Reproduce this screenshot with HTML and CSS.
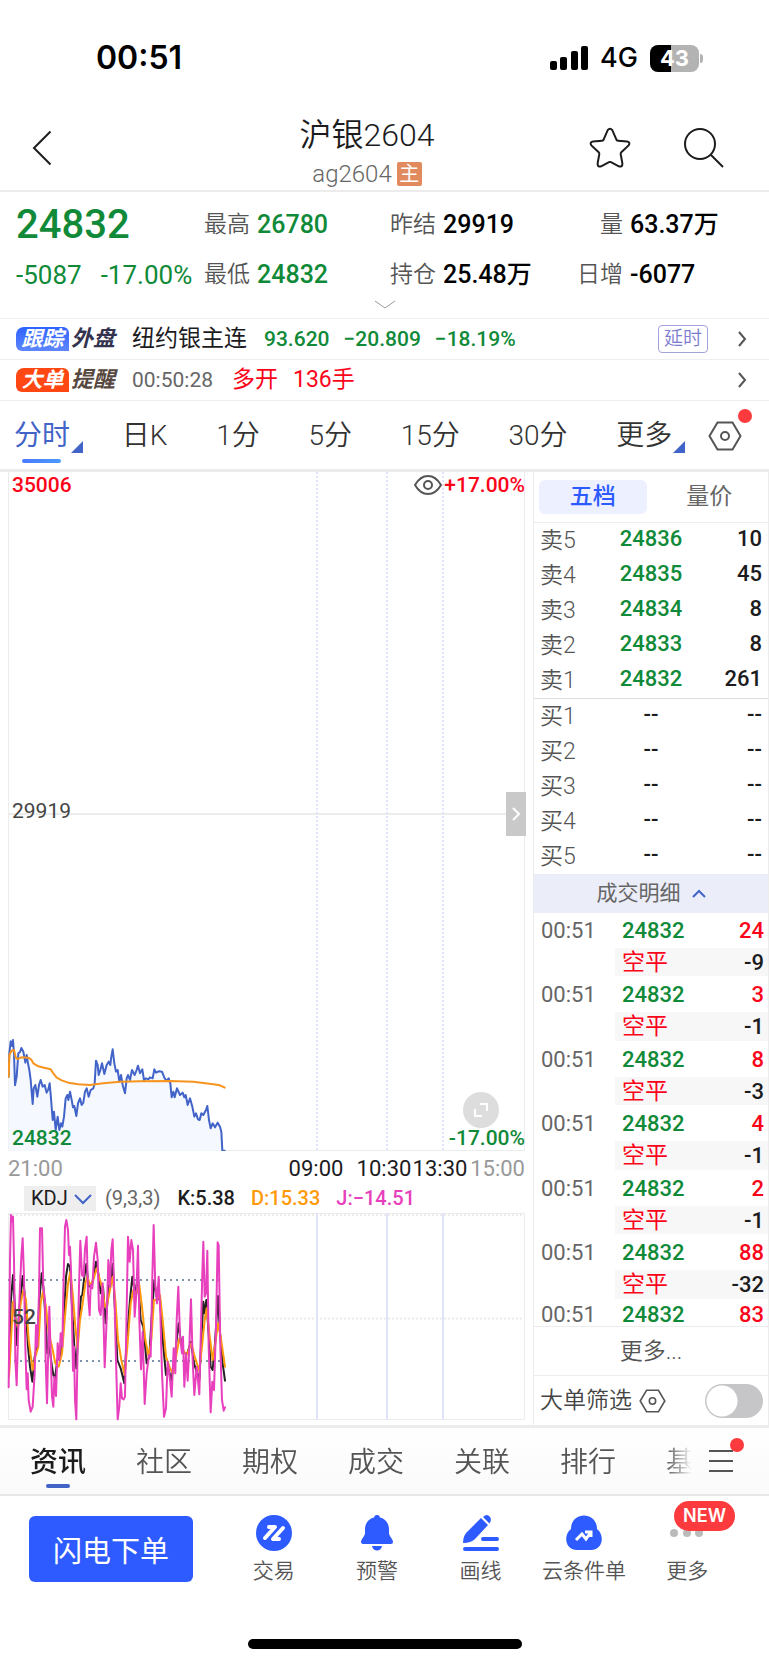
FILE: index.html
```html
<!DOCTYPE html>
<html lang="zh-CN">
<head>
  <meta charset="UTF-8">
  <meta name="viewport" content="width=device-width, initial-scale=1">
  <title>沪银2604</title>
  <link rel="stylesheet" href="styles.css">
</head>
<body>

  <!-- STATUS BAR -->
  <div class="status-bar">
    <span class="clock">00:51</span>
    <div class="status-icons">
      <svg width="38" height="24" viewBox="0 0 38 24">
        <rect x="0" y="15" width="7" height="9" rx="2"/>
        <rect x="10" y="11" width="7" height="13" rx="2"/>
        <rect x="21" y="5" width="7" height="19" rx="2"/>
        <rect x="31" y="0" width="7" height="24" rx="2"/>
      </svg>
      <span class="network">4G</span>
      <span class="battery">43</span>
    </div>
  </div>

  <!-- HEADER -->
  <header class="header">
    <button class="icon-btn back" aria-label="返回">
      <svg width="20" height="36" viewBox="0 0 20 36"><path d="M18.500 1.500L2 18l16.500 16.500"/></svg>
    </button>
    <div class="title">
      <h1>沪银2604</h1>
      <p>ag2604<span class="main-badge">主</span></p>
    </div>
    <div class="header-actions">
      <button class="icon-btn" aria-label="自选">
        <svg width="42" height="42" viewBox="0 0 42 42"><path d="M18.700 3.200Q21 .2 23.300 3.200L27.300 12.400Q27.700 13.600 29 13.700L38 14.600Q41.800 15.400 39.600 18.400L32.300 25.300Q31.600 26 31.700 27.200L33.400 36.500Q33.500 40.600 29.800 39.300L22 35.200Q21 34.700 20 35.200L12.200 39.300Q8.500 40.600 8.600 36.500L10.300 27.200Q10.400 26 9.700 25.300L2.400 18.400Q.2 15.400 4 14.600L13 13.700Q14.300 13.600 14.700 12.400Z"/></svg>
      </button>
      <button class="icon-btn" aria-label="搜索">
        <svg width="42" height="42" viewBox="0 0 42 42"><circle cx="17" cy="17" r="15"/><path d="M28 28l12 12"/></svg>
      </button>
    </div>
  </header>

  <!-- QUOTE -->
  <section class="quote">
    <div class="quote-grid">
      <strong class="last">24832</strong>
      <div class="pair"><span>最高</span><b class="down">26780</b></div>
      <div class="pair"><span>昨结</span><b>29919</b></div>
      <div class="pair"><span class="right">量</span><b>63.37万</b></div>
      <div class="change down"><span>-5087</span><span>-17.00%</span></div>
      <div class="pair"><span>最低</span><b class="down">24832</b></div>
      <div class="pair"><span>持仓</span><b>25.48万</b></div>
      <div class="pair"><span class="right">日增</span><b>-6077</b></div>
    </div>
    <button class="icon-btn expand" aria-label="展开">
      <svg width="22" height="10" viewBox="0 0 22 10"><path d="M1 1l10 7 10-7"/></svg>
    </button>
  </section>

  <a class="strip" href="#">
    <span class="tag"><i class="tag-fill blue">跟踪</i><i class="tag-text navy">外盘</i></span>
    <span class="strip-name">纽约银主连</span>
    <span class="strip-num down">93.620</span>
    <span class="strip-num down">−20.809</span>
    <span class="strip-num down">−18.19%</span>
    <span class="delay">延时</span>
    <svg class="arrow" width="9" height="16" viewBox="0 0 9 16"><path d="M1 1l6 7-6 7"/></svg>
  </a>
  <a class="strip" href="#">
    <span class="tag"><i class="tag-fill orange">大单</i><i class="tag-text brown">提醒</i></span>
    <span class="strip-time">00:50:28</span>
    <span class="strip-red">多开</span>
    <span class="strip-red">136手</span>
    <svg class="arrow" width="9" height="16" viewBox="0 0 9 16"><path d="M1 1l6 7-6 7"/></svg>
  </a>

  <!-- PERIOD TABS -->
  <nav class="periods">
    <button class="period active corner">分时</button>
    <button class="period">日K</button>
    <button class="period">1分</button>
    <button class="period">5分</button>
    <button class="period">15分</button>
    <button class="period">30分</button>
    <button class="period corner">更多</button>
    <button class="icon-btn setting" aria-label="设置">
      <svg width="34" height="30" viewBox="0 0 34 30"><path d="M9.500 1.500h15L32.500 15l-8 13.500h-15L1.500 15z"/><circle cx="17" cy="15" r="4"/></svg>
    </button>
  </nav>

  <main class="main">
    <!-- CHARTS -->
    <section class="charts">
      <div class="chart price-chart">
        <svg viewBox="0 0 517 679" preserveAspectRatio="none">
          <path class="axis" d="M.5 0V678.500H516.500V0"/>
          <path class="axis" d="M0 342H517" stroke-width="2"/>
          <path class="session dotted" d="M309 0V679M379 0V679M435 0V679"/>
          <g transform="translate(-8 548) scale(.33333)">
            <path class="area" d="M26 392V170L28 100 32 64 36 78 39 60 42 100 45 196 50 170 55 100 60 96 64 84 70 95 76 128 80 105 84 130 88 150 92 180 98 252 101 205 106 195 112 230 117 195 122 180 128 200 134 195 140 218 145 208 149 190 153 235 158 300 162 275 167 330 173 290 178 330 183 310 187 320 192 290 197 235 202 225 205 240 210 215 215 240 219 262 223 258 229 288 234 250 240 235 245 255 250 248 255 215 260 205 266 230 272 210 280 205 284 190 288 122 296 165 306 130 313 162 326 125 338 88 348 155 358 185 363 165 375 220 384 165 396 150 414 137 432 180 458 175 463 148 486 155 500 182 511 190 515 232 531 205 553 232 577 260 594 298 622 258 632 325 653 308 664 335 667 392z"/>
            <polyline class="line price" points="26,170 28,100 32,64 36,78 39,60 42,100 45,196 50,170 55,100 60,96 64,84 70,95 76,128 80,105 84,130 88,150 92,180 98,252 101,205 106,195 112,230 117,195 122,180 128,200 134,195 140,218 145,208 149,190 153,235 158,300 162,275 167,330 173,290 178,330 183,310 187,320 192,290 197,235 202,225 205,240 210,215 215,240 219,262 223,258 229,288 234,250 240,235 245,255 250,248 255,215 260,205 266,230 272,210 280,205 284,190 288,122 293,135 296,165 301,150 306,130 313,162 320,135 326,125 331,135 334,110 338,88 343,130 348,155 353,150 358,185 363,165 368,195 375,220 380,175 384,165 390,180 396,150 404,165 410,150 414,137 420,160 427,148 432,180 438,175 445,178 450,172 458,175 463,148 468,158 476,154 486,155 494,175 500,182 506,175 511,190 515,232 520,215 524,232 531,205 540,225 548,218 553,232 557,225 563,255 570,235 577,260 583,290 588,280 594,298 599,300 604,280 610,285 618,270 622,258 627,300 632,325 638,310 645,322 653,308 660,320 664,335 667,392 674,392"/>
            <polyline class="line average" points="26,170 28,105 34,93 42,90 47,112 52,117 65,112 85,113 93,118 100,130 115,139 135,144 152,148 160,160 170,173 185,181 205,188 235,193 270,195 310,190 360,185 420,184 510,183 580,185 640,193 660,196 674,203"/>
          </g>
        </svg>
        <span class="scale top-left up">35006</span>
        <span class="scale top-right up">
          <svg width="28" height="20" viewBox="0 0 28 20"><path d="M1 10C8-2 20-2 27 10 20 22 8 22 1 10z"/><circle cx="14" cy="10" r="4"/></svg>+17.00%</span>
        <span class="scale middle-left">29919</span>
        <span class="scale bottom-left down">24832</span>
        <span class="scale bottom-right down">-17.00%</span>
        <button class="side-handle" aria-label="收起盘口">
          <svg width="9" height="14" viewBox="0 0 9 14"><path d="M1 1l6 6-6 6"/></svg>
        </button>
        <button class="fullscreen" aria-label="全屏">
          <svg width="16" height="16" viewBox="0 0 16 16"><path d="M7 2h7v7M2 7v7h7"/></svg>
        </button>
      </div>

      <div class="time-axis">
        <span class="edge">21:00</span>
        <span>09:00</span>
        <span>10:30</span>
        <span>13:30</span>
        <span class="edge last-time">15:00</span>
      </div>

      <div class="indicator">
        <label class="indicator-pick">
          <select aria-label="指标"><option>KDJ</option></select>
          <svg width="18" height="11" viewBox="0 0 18 11"><path d="M1 1l8 8 8-8"/></svg>
        </label>
        <span class="params">(9,3,3)</span>
        <span class="k">K:5.38</span>
        <span class="d">D:15.33</span>
        <span class="j">J:−14.51</span>
      </div>

      <div class="chart kdj-chart">
        <svg viewBox="0 0 517 207" preserveAspectRatio="none">
          <path class="axis" d="M.5 .5H516.500V206.500H.5z"/>
          <path class="axis dotted" d="M0 2H517M0 105.500H517" stroke-width="2"/>
          <path class="session" d="M309 0V207M379 0V207M435 0V207"/>
          <path class="level" d="M0 67H214M0 148H214"/>
          <g transform="translate(-8 -53) scale(.33333)">
            <polyline class="line kdj-k" points="27,640 32,430 39,345 44,430 50,555 58,450 68,348 76,420 84,560 90,620 97,665 104,590 112,560 118,420 125,340 131,390 138,500 142,580 148,560 156,620 160,645 165,655 172,600 182,590 190,500 198,350 204,312 210,320 216,440 223,560 229,625 236,500 243,410 247,405 253,350 259,312 266,380 276,375 288,305 295,340 302,400 309,380 317,490 326,380 332,360 338,312 345,450 352,600 362,625 373,670 380,540 390,420 397,350 405,400 414,350 422,480 430,500 440,610 448,590 455,470 463,362 470,410 480,420 490,560 498,645 504,620 514,660 522,610 530,540 536,490 542,540 552,580 562,580 573,545 582,610 598,660 604,540 610,425 614,460 619,420 626,520 632,620 638,630 645,550 654,408 660,520 668,610 675,662"/>
            <polyline class="line kdj-d" points="27,650 33,540 39,425 46,480 54,500 62,430 70,390 78,420 86,540 98,630 106,590 115,560 122,430 129,395 138,440 146,520 156,560 166,610 176,620 186,580 194,480 204,370 211,335 218,400 226,500 233,565 240,480 248,430 256,370 262,350 270,375 280,360 290,325 300,360 308,385 314,440 322,430 330,390 338,350 346,420 354,540 364,600 374,645 382,560 392,430 400,390 410,400 418,375 426,440 436,540 446,590 454,540 462,420 470,420 480,405 488,480 498,590 510,625 520,640 530,580 538,535 548,570 560,585 574,550 584,590 598,632 606,560 614,480 620,445 628,520 638,600 646,550 654,490 662,530 675,620"/>
            <polyline class="line kdj-j" points="26,682 30,300 33,165 36,185 39,170 42,300 46,600 50,676 55,500 60,380 64,290 68,235 72,350 76,560 80,688 83,640 86,720 92,755 98,740 104,640 108,495 112,560 117,400 120,205 126,205 130,380 135,420 137,600 141,730 145,560 148,440 152,580 156,710 160,740 163,650 168,708 173,550 178,600 182,520 187,560 191,350 195,200 199,180 204,210 207,285 210,260 213,330 216,480 219,632 222,560 225,720 229,778 233,560 237,380 241,242 246,345 251,350 255,265 260,230 264,400 269,466 272,375 277,385 282,290 288,248 293,300 297,450 302,465 308,370 314,622 320,480 325,300 330,380 334,270 338,238 343,400 348,600 353,778 358,740 362,670 366,715 371,718 375,710 379,500 384,230 389,305 394,240 399,270 404,470 409,400 414,257 418,480 423,628 428,515 434,732 440,640 447,585 452,590 457,350 461,195 466,380 471,430 476,350 481,460 486,640 492,770 498,745 503,605 509,650 515,710 521,565 526,640 530,480 535,380 540,530 546,580 549,530 553,680 558,580 563,662 568,560 573,418 578,600 583,705 590,620 598,703 603,500 607,340 610,245 614,410 618,400 622,272 626,560 632,757 637,665 642,690 648,500 653,247 656,255 661,560 666,720 671,752 675,742"/>
          </g>
        </svg>
        <span class="scale center-left">52</span>
      </div>
    </section>

    <!-- ORDER BOOK -->
    <aside class="book">
      <div class="book-tabs">
        <button class="book-tab active">五档</button>
        <button class="book-tab">量价</button>
      </div>
      <table class="levels">
        <tbody class="asks">
          <tr><th>卖5</th><td class="down">24836</td><td>10</td></tr>
          <tr><th>卖4</th><td class="down">24835</td><td>45</td></tr>
          <tr><th>卖3</th><td class="down">24834</td><td>8</td></tr>
          <tr><th>卖2</th><td class="down">24833</td><td>8</td></tr>
          <tr><th>卖1</th><td class="down">24832</td><td>261</td></tr>
        </tbody>
        <tbody>
          <tr><th>买1</th><td>--</td><td>--</td></tr>
          <tr><th>买2</th><td>--</td><td>--</td></tr>
          <tr><th>买3</th><td>--</td><td>--</td></tr>
          <tr><th>买4</th><td>--</td><td>--</td></tr>
          <tr><th>买5</th><td>--</td><td>--</td></tr>
        </tbody>
      </table>
      <button class="detail-bar">成交明细
        <svg width="14" height="9" viewBox="0 0 14 9"><path d="M1 8l6-6 6 6"/></svg>
      </button>
      <div class="trades">
        <table>
          <tbody><tr><th>00:51</th><td class="down">24832</td><td class="up">24</td></tr><tr class="kind"><th></th><td>空平</td><td>-9</td></tr></tbody>
          <tbody><tr><th>00:51</th><td class="down">24832</td><td class="up">3</td></tr><tr class="kind"><th></th><td>空平</td><td>-1</td></tr></tbody>
          <tbody><tr><th>00:51</th><td class="down">24832</td><td class="up">8</td></tr><tr class="kind"><th></th><td>空平</td><td>-3</td></tr></tbody>
          <tbody><tr><th>00:51</th><td class="down">24832</td><td class="up">4</td></tr><tr class="kind"><th></th><td>空平</td><td>-1</td></tr></tbody>
          <tbody><tr><th>00:51</th><td class="down">24832</td><td class="up">2</td></tr><tr class="kind"><th></th><td>空平</td><td>-1</td></tr></tbody>
          <tbody><tr><th>00:51</th><td class="down">24832</td><td class="up">88</td></tr><tr class="kind"><th></th><td>空平</td><td>-32</td></tr></tbody>
          <tbody class="final"><tr><th>00:51</th><td class="down">24832</td><td class="up">83</td></tr></tbody>
        </table>
      </div>
      <button class="more-trades">更多...</button>
      <label class="filter">
        <span>大单筛选</span>
        <svg width="27" height="24" viewBox="0 0 34 30"><path d="M9.500 1.500h15L32.500 15l-8 13.500h-15L1.500 15z"/><circle cx="17" cy="15" r="4"/></svg>
        <input type="checkbox" class="switch">
      </label>
    </aside>
  </main>

  <!-- NEWS TABS -->
  <nav class="news-tabs">
    <div class="news-scroll">
      <button class="active">资讯</button>
      <button>社区</button>
      <button>期权</button>
      <button>成交</button>
      <button>关联</button>
      <button>排行</button>
      <button>基差</button>
    </div>
    <button class="icon-btn menu" aria-label="全部">
      <svg width="24" height="24" viewBox="0 0 24 24"><path d="M0 2h24M0 12h24M0 22h24"/></svg>
    </button>
  </nav>

  <!-- ACTION BAR -->
  <footer class="actions">
    <button class="order-btn">闪电下单</button>
    <button class="action">
      <svg width="36" height="36" viewBox="0 0 36 36"><circle cx="18" cy="18" r="18" fill="#2d5bff"/><path d="M13 12h6L9 23M27 13L17 24h6" fill="none" stroke="#fff" stroke-width="4" stroke-linecap="round" stroke-linejoin="round"/></svg>
      交易
    </button>
    <button class="action">
      <svg width="36" height="36" viewBox="0 0 36 36"><path d="M18 0a3 3 0 0 1 3 2.400C27 4 30 9 30 14v4c0 3 4 6 4 9 0 1-1 2-2 2H4c-1 0-2-1-2-2 0-3 4-6 4-9v-4C6 9 9 4 15 2.400A3 3 0 0 1 18 0zM13 31h10c-1 6-9 6-10 0z" fill="#2d5bff"/></svg>
      预警
    </button>
    <button class="action">
      <svg width="36" height="36" viewBox="0 0 36 36"><path d="M18 3l7 7L12 24Q8 28 0 28 0 20 5 16zM20 2q4-4 7 0 2 3-.5 6.500z" fill="#2d5bff"/><path d="M20 24h14M2 34h32" stroke="#2d5bff" stroke-width="4" stroke-linecap="round"/></svg>
      画线
    </button>
    <button class="action">
      <svg width="36" height="36" viewBox="0 0 36 36"><path d="M5 14C5-4 31-4 31 14c8 6 6 21-6 21H11C-1 35-3 20 5 14z" fill="#2d5bff"/><path d="M10 25l6-6 4 5 5-7M19 17h6v5" fill="none" stroke="#fff" stroke-width="3"/></svg>
      云条件单
    </button>
    <button class="action">
      <svg width="36" height="36" viewBox="0 0 36 36"><g fill="#bbb"><circle cx="5" cy="18" r="4"/><circle cx="18" cy="18" r="4"/><circle cx="30" cy="18" r="4"/></g></svg>
      更多
      <span class="new-badge">NEW</span>
    </button>
  </footer>
  <div class="home-bar"></div>

</body>
</html>
```

FILE: styles.css
```css
* { margin: 0; padding: 0; box-sizing: border-box; }
body {
  font-family: Roboto, "Noto Sans CJK SC", sans-serif;
  background: #fff; color: #1c1c1e;
}
button, select { border: none; background: none; font: inherit; color: inherit; }
a { color: inherit; text-decoration: none; }
i { font-weight: 700; }
table { width: 100%; border-spacing: 0; table-layout: fixed; }
svg { display: block; fill: none; }
.up { color: #fb0419; }
.down { color: #108a38; }
.icon-btn svg { stroke: #1c1c1e; stroke-width: 2; }

/* STATUS BAR */
.status-bar {
  display: flex; justify-content: space-between; align-items: center;
  height: 106px; padding: 10px 70px 0 96px; color: #000;
}
.clock { font: 600 32px/40px Inter, sans-serif; }
.status-icons { display: flex; align-items: center; gap: 12px; }
.status-icons svg { fill: #000; }
.network { font: 500 27px/32px Inter, sans-serif; }
.battery {
  position: relative; width: 49px; height: 27px; border-radius: 8px;
  background: linear-gradient(90deg, #000 43%, #b3b3b3 43%);
  color: #fff; font: 700 22px/27px Inter, sans-serif; text-align: center;
}
.battery::after {
  content: ""; position: absolute; right: -4px; top: 9px;
  width: 3px; height: 9px; border-radius: 0 3px 3px 0; background: #b3b3b3;
}

/* HEADER */
.header {
  display: grid; grid-template-columns: 235fr 200fr 258fr; align-items: center;
  height: 86px; padding: 0 44px 0 32px; border-bottom: 2px solid #ececec;
}
.back { justify-self: start; }
.title { padding-top: 10px; text-align: center; }
.title h1 { font-size: 32px; font-weight: 350; line-height: 38px; }
.title p {
  display: flex; justify-content: center; align-items: center; gap: 5px; margin-top: 4px;
  font-size: 24px; font-weight: 350; line-height: 32px; color: #666;
}
.main-badge {
  width: 25px; height: 24px; border-radius: 2px; background: #e08a5e;
  color: #fff; font-size: 20px; font-weight: 400; line-height: 24px; text-align: center;
}
.header-actions { display: flex; justify-content: flex-end; gap: 52px; }

/* QUOTE */
.quote { height: 127px; padding: 8px 16px 0; border-bottom: 1px solid #eee; }
.quote-grid {
  display: grid; grid-template-columns: 188fr 186fr 187fr 176fr;
  grid-template-rows: 50px 50px; align-items: center;
}
.quote-grid > * { min-width: 0; }
.last { font-size: 40px; font-weight: 500; line-height: 48px; color: #108a38; }
.pair { display: flex; align-items: center; gap: 7px; font-size: 25px; line-height: 36px; white-space: nowrap; }
.pair span { font-size: 23px; font-weight: 350; color: #555; }
.pair b { font-weight: 500; color: #000; }
.pair b.down { color: #108a38; }
.pair .right { width: 46px; text-align: right; }
.change { display: flex; gap: 19px; font-size: 26px; line-height: 36px; white-space: nowrap; }
.expand { display: block; margin: 0 auto; }
.expand svg { stroke: #999; stroke-width: 1; }

/* STRIPS */
.strip {
  display: flex; align-items: center; height: 41px; padding: 0 22px 0 16px;
  border-bottom: 1px solid #eee; white-space: nowrap; line-height: 32px;
}
.tag { display: flex; align-items: center; gap: 2px; width: 100px; margin-right: 16px; line-height: 24px; }
.tag-fill { width: 53px; height: 24px; border-radius: 8px 6px 0 6px; color: #fff; font-size: 21px; text-align: center; }
.blue { background: linear-gradient(#2f62ff, #5d86ff); }
.orange { background: #ff4713; }
.tag-text { font-size: 22px; }
.navy { color: #33334f; }
.brown { color: #57483f; }
.strip-name { font-size: 23px; margin-right: 17px; }
.strip-num { font-size: 21px; font-weight: 500; margin-right: 14px; }
.strip-time { font-size: 21px; color: #666; margin-right: 19px; }
.strip-red { font-size: 23px; color: #fb0419; margin-right: 15px; }
.delay {
  height: 28px; margin-left: auto; padding: 0 5px; border: 1px solid #a3a3dc; border-radius: 4px;
  color: #7b7bd0; font-size: 19px; font-weight: 350; line-height: 26px;
}
.arrow { margin-left: auto; stroke: #555; stroke-width: 2; }
.delay + .arrow { margin-left: 30px; }

/* PERIOD TABS */
.periods {
  display: flex; justify-content: space-between; align-items: center;
  height: 71px; padding: 2px 27px 0 14px; border-bottom: 3px solid #ececec;
}
.period { position: relative; font-size: 28px; font-weight: 350; line-height: 36px; color: #333; }
.period.active { margin-right: -10px; color: #4263c8; font-weight: 400; }
.period.active::before {
  content: ""; position: absolute; left: 8px; bottom: -9px;
  width: 39px; height: 4px; border-radius: 2px;
  background: linear-gradient(90deg, #4a7aff, #4a9aff);
}
.corner { padding-right: 13px; }
.corner::after {
  content: ""; position: absolute; right: 0; bottom: 1px;
  border: 6px solid #4263c8; border-top-color: transparent; border-left-color: transparent;
}
.setting, .menu { position: relative; }
.setting { margin-left: -26px; }
.setting svg, .menu svg { stroke: #555; }
.setting::after, .menu::after {
  content: ""; position: absolute; right: -10px; top: -12px;
  width: 14px; height: 14px; border-radius: 50%; background: #fd3a3d;
}

/* CHARTS */
.main { display: grid; grid-template-columns: 533fr 236fr; border-bottom: 3px solid #ececec; }
.charts { padding: 0 8px 5px; min-width: 0; }
.chart { position: relative; }
.chart > svg { width: 100%; }
.price-chart > svg { height: 679px; }
.kdj-chart > svg { height: 207px; overflow: visible; }
.axis { stroke: #ececec; }
.session { stroke: #dfe4fb; stroke-width: 2; }
.dotted { stroke-dasharray: 2 2; }
.level { stroke: #8093ad; stroke-width: 2; stroke-dasharray: 2 4; }
.line { stroke-linejoin: round; stroke-linecap: round; stroke-width: 6; }
.area { fill: #f5f9ff; }
.price { stroke: #4263c8; }
.average { stroke: #f7941d; }
.kdj-k { stroke: #222; }
.kdj-d { stroke: #ff9a0a; }
.kdj-j { stroke: #e83fbd; }
.scale { position: absolute; font-size: 21px; font-weight: 500; line-height: 24px; }
.top-left { left: 4px; top: 1px; }
.top-right { right: 0; top: 1px; display: flex; align-items: center; gap: 2px; }
.top-right svg { stroke: #555; stroke-width: 2; }
.middle-left { left: 4px; top: 327px; color: #444; font-weight: 400; }
.bottom-left { left: 4px; bottom: 1px; }
.bottom-right { right: 0; bottom: 1px; }
.center-left { left: 4px; top: 92px; color: #444; }
.side-handle {
  position: absolute; right: -1px; top: 320px; width: 20px; height: 44px;
  display: grid; place-items: center; background: #c9c9c9;
}
.side-handle svg, .fullscreen svg { stroke: #fff; stroke-width: 2; }
.fullscreen {
  position: absolute; right: 26px; bottom: 23px; width: 36px; height: 36px;
  display: grid; place-items: center; border-radius: 50%; background: #ddd;
}
.time-axis {
  display: grid; grid-template-columns: 268fr 80fr 56fr 56fr 57fr;
  font-size: 22px; line-height: 35px; text-align: center;
}
.edge { color: #999; text-align: left; }
.last-time { text-align: right; }
.indicator {
  display: flex; align-items: flex-start; height: 27px; padding-left: 16px;
  font-size: 20px; line-height: 25px; white-space: nowrap;
}
.indicator-pick { position: relative; margin-right: 9px; background: #eee; }
.indicator-pick select { appearance: none; display: block; width: 72px; height: 25px; padding-left: 7px; }
.indicator-pick svg { position: absolute; right: 4px; top: 8px; stroke: #4263c8; stroke-width: 2; pointer-events: none; }
.params { color: #666; margin-right: 17px; }
.k { font-weight: 500; margin-right: 16px; }
.d { font-weight: 500; color: #ff9a0a; margin-right: 16px; }
.j { font-weight: 500; color: #e83fbd; }

/* ORDER BOOK */
.book { display: flex; flex-direction: column; border: 1px solid #ececec; border-width: 0 1px; font-size: 22px; min-width: 0; }
.book-tabs { display: grid; grid-template-columns: 106fr 106fr; gap: 9px; padding: 8px 5px; height: 51px; border-bottom: 1px solid #ececec; }
.book-tab { height: 34px; border-radius: 6px; line-height: 34px; font-size: 23px; color: #666; }
.book-tab.active { background: #edf1ff; color: #2d5bff; font-weight: 500; }
.levels tr { height: 35px; }
.levels th, .levels td { line-height: 29px; }
.levels th { padding: 3px 0 3px 6px; text-align: left; font-size: 23px; font-weight: 350; color: #555; }
.levels td { padding: 1px 0 5px; text-align: center; font-weight: 500; }
.levels td:last-child { padding-right: 6px; text-align: right; }
.asks tr:last-child th, .asks tr:last-child td { border-bottom: 1px solid #ddd; }
.detail-bar {
  display: flex; justify-content: center; align-items: center; gap: 11px;
  height: 39px; background: #ebedf9; color: #666; font-size: 21px; line-height: 39px;
}
.detail-bar svg { stroke: #4263c8; stroke-width: 2; }
.trades { padding-top: 1px; border-bottom: 1px solid #ececec; }
.trades tr { height: 32px; }
.trades tbody:nth-child(even) .kind { height: 33px; }
.trades th { width: 81px; padding-left: 7px; text-align: left; font-weight: 400; color: #666; }
.trades td { line-height: 27px; padding-left: 7px; font-weight: 500; }
.trades td:last-child { padding: 0 4px 0 0; text-align: right; }
.trades .kind td { background: #f7f7f8; border: 2px solid #fff; border-width: 2px 0; font-size: 23px; font-weight: 400; color: #fb0419; }
.trades .kind td:last-child { font-size: 22px; font-weight: 500; color: #1c1c1e; }
.trades .final tr { height: 25px; }
.trades .final th, .trades .final td { padding-top: 3px; line-height: 22px; }
.trades .final td:last-child { padding-top: 3px; }
.more-trades { height: 49px; padding-bottom: 4px; border-bottom: 1px solid #ececec; font-size: 23px; font-weight: 350; color: #555; }
.filter { display: flex; align-items: center; flex: 1; padding: 0 5px 0 6px; font-size: 23px; font-weight: 350; line-height: 32px; color: #444; white-space: nowrap; }
.filter svg { margin-left: 7px; stroke: #555; stroke-width: 2; }
.switch {
  appearance: none; margin-left: auto; width: 58px; height: 34px; border-radius: 17px;
  background: radial-gradient(circle at 17px 17px, #fff 15px, #c6c6c8 16px);
}

/* NEWS TABS */
.news-tabs {
  display: flex; align-items: center; height: 68px; padding: 0 36px 0 30px;
  background: linear-gradient(#fff, #fafafa); border-bottom: 2px solid #e8e8e8;
}
.news-scroll {
  display: flex; gap: 50px; flex: 1; overflow: hidden; margin-right: 17px;
  -webkit-mask: linear-gradient(90deg, #000 96%, transparent); mask: linear-gradient(90deg, #000 96%, transparent);
}
.news-scroll button { position: relative; flex: none; height: 66px; padding-bottom: 2px; font-size: 28px; font-weight: 350; color: #555; }
.news-scroll .active { font-weight: 500; color: #1c1c1e; }
.news-scroll .active::after {
  content: ""; position: absolute; left: 16px; bottom: 6px;
  width: 24px; height: 4px; border-radius: 2px; background: #4263c8;
}
.menu::after { top: -11px; right: -11px; }

/* ACTION BAR */
.actions { display: flex; align-items: center; height: 105px; padding: 0 30px 0 29px; }
.order-btn {
  width: 164px; height: 66px; margin-right: 29px; border-radius: 6px;
  background: #2d5bff; color: #fff; font-size: 29px; font-weight: 400;
}
.action {
  position: relative; flex: 1; display: flex; flex-direction: column; align-items: center;
  gap: 5px; padding-top: 4px; font-size: 21px; font-weight: 350; line-height: 30px; color: #555; white-space: nowrap;
}
.new-badge {
  position: absolute; right: 4px; top: -10px; height: 30px; padding: 0 9px; border-radius: 15px;
  background: #fd3a3d; color: #fff; font: 600 18px/30px Inter, sans-serif;
}
.home-bar { width: 274px; height: 10px; margin: 38px auto 16px; border-radius: 5px; background: #000; }
```
